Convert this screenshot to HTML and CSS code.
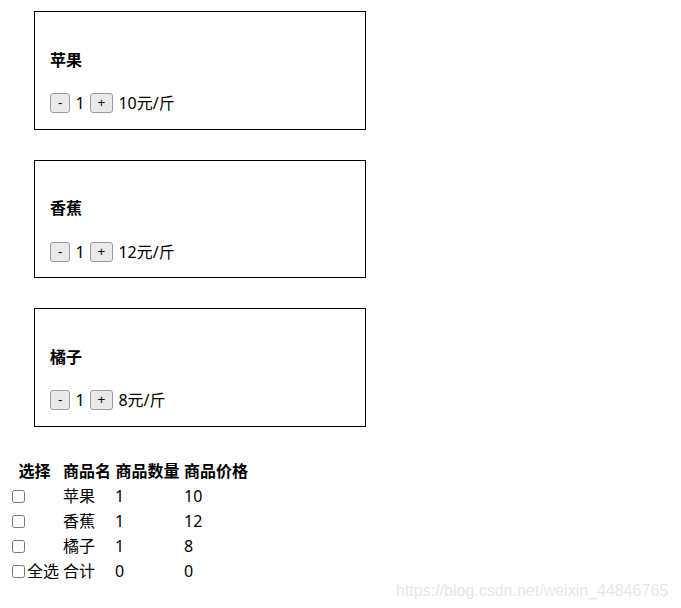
FILE: index.html
```html
<!DOCTYPE html>
<html lang="zh">
<head>
<meta charset="utf-8">
<title>购物车</title>
<link rel="stylesheet" href="styles.css">
</head>
<body>
<div class="list">
  <div class="card">
    <h4 class="title">苹果</h4>
    <div class="row"><button class="btn">-</button><span class="num">1</span><button class="btn">+</button><span class="price">10元/斤</span></div>
  </div>
  <div class="card">
    <h4 class="title">香蕉</h4>
    <div class="row"><button class="btn">-</button><span class="num">1</span><button class="btn">+</button><span class="price">12元/斤</span></div>
  </div>
  <div class="card">
    <h4 class="title">橘子</h4>
    <div class="row"><button class="btn">-</button><span class="num">1</span><button class="btn">+</button><span class="price">8元/斤</span></div>
  </div>
</div>
<table class="cart">
  <thead>
    <tr><th class="c1">选择</th><th class="c2">商品名</th><th class="c3">商品数量</th><th class="c4">商品价格</th></tr>
  </thead>
  <tbody>
    <tr><td><input type="checkbox" class="chk"></td><td>苹果</td><td>1</td><td>10</td></tr>
    <tr><td><input type="checkbox" class="chk"></td><td>香蕉</td><td>1</td><td>12</td></tr>
    <tr><td><input type="checkbox" class="chk"></td><td>橘子</td><td>1</td><td>8</td></tr>
    <tr><td><input type="checkbox" class="chk">全选</td><td>合计</td><td>0</td><td>0</td></tr>
  </tbody>
</table>
<div class="watermark">https://blog.csdn.net/weixin_44846765</div>
</body>
</html>
```
FILE: styles.css
```css
html, body {
  background: #fff;
}
body {
  margin: 8px;
  font-family: "Noto Sans", "Noto Sans CJK SC", sans-serif;
  font-size: 16px;
  color: #000;
}
.list {
  padding-left: 26px;
  padding-top: 3px;
}
.card {
  box-sizing: border-box;
  width: 332px;
  height: 118.5px;
  border: 1px solid #000;
  padding: 37.5px 15px 0;
  margin-bottom: 30px;
}
.card:last-child {
  margin-bottom: 0;
}
.title {
  margin: 0;
  font-size: 16px;
  line-height: 21px;
  font-weight: bold;
}
.row {
  margin-top: 21.5px;
  height: 22px;
  display: flex;
  align-items: center;
  gap: 5px;
  line-height: 22px;
}
.btn {
  box-sizing: border-box;
  height: 20px;
  margin: 0;
  padding: 1px 7px;
  font-family: "Liberation Sans", Arial, sans-serif;
  font-size: 13.33px;
  line-height: 16px;
  color: #000;
  background: #e9e9e9;
  border: 1px solid #9a9a9a;
  border-radius: 3px;
}
.num, .price {
  line-height: 22px;
}
.cart {
  margin-top: 31px;
  margin-left: -1px;
  border-spacing: 2px;
  font-size: 16px;
}
.cart th, .cart td {
  padding: 1px;
  line-height: 21px;
  height: 21px;
  white-space: nowrap;
}
.cart th {
  font-weight: bold;
  text-align: center;
}
.cart td {
  text-align: left;
}
.cart td:first-child {
  padding-left: 2px;
}
.c1 { width: 48px; }
.c2 { width: 48px; }
.c3 { width: 65px; }
.c4 { width: 63px; }
.chk {
  width: 13px;
  height: 13px;
  margin: 0 2px 0 1px;
  vertical-align: middle;
  position: relative;
  top: -1px;
}
.watermark {
  position: absolute;
  left: 396px;
  top: 582px;
  font-family: "Liberation Sans", Arial, sans-serif;
  font-size: 16px;
  line-height: 18px;
  color: #e6e6e6;
  white-space: nowrap;
}
```
